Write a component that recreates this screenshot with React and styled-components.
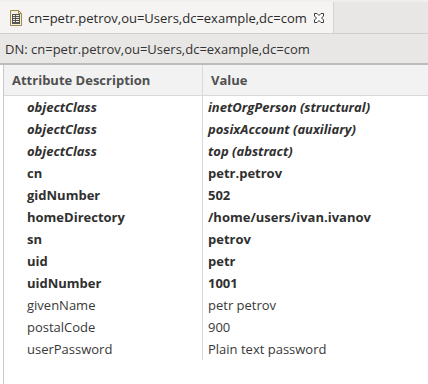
import React from "react";
import styled, { createGlobalStyle } from "styled-components";

const GlobalStyle = createGlobalStyle`
  body {
    margin: 0;
    background: #ffffff;
    font-family: "Open Sans", "Noto Sans", sans-serif;
    font-size: 13px;
    color: #333333;
  }
`;

const rows = [
  { name: "objectClass", value: "inetOrgPerson (structural)", kind: "oc" },
  { name: "objectClass", value: "posixAccount (auxiliary)", kind: "oc" },
  { name: "objectClass", value: "top (abstract)", kind: "oc" },
  { name: "cn", value: "petr.petrov", kind: "must" },
  { name: "gidNumber", value: "502", kind: "must" },
  { name: "homeDirectory", value: "/home/users/ivan.ivanov", kind: "must" },
  { name: "sn", value: "petrov", kind: "must" },
  { name: "uid", value: "petr", kind: "must" },
  { name: "uidNumber", value: "1001", kind: "must" },
  { name: "givenName", value: "petr petrov", kind: "may" },
  { name: "postalCode", value: "900", kind: "may" },
  { name: "userPassword", value: "Plain text password", kind: "may" },
];

export default function App() {
  return (
    <>
      <GlobalStyle />
      <Editor>
        <TabBar>
          <Tab>
            <EntryIcon />
            <TabTitle>cn=petr.petrov,ou=Users,dc=example,dc=com</TabTitle>
            <CloseIcon />
          </Tab>
        </TabBar>
        <DnBar>DN: cn=petr.petrov,ou=Users,dc=example,dc=com</DnBar>
        <TableWrap>
          <Table>
            <HeadCell $first>Attribute Description</HeadCell>
            <HeadCell>Value</HeadCell>
            {rows.map((r, i) => (
              <React.Fragment key={i}>
                <Cell $first $kind={r.kind}>
                  {r.name}
                </Cell>
                <Cell $kind={r.kind}>{r.value}</Cell>
              </React.Fragment>
            ))}
          </Table>
        </TableWrap>
      </Editor>
    </>
  );
}

function EntryIcon() {
  return (
    <IconSvg width="12" height="16" viewBox="0 0 12 16">
      <path d="M0.5 0.5 H8.5 L11.5 3.5 V15.5 H0.5 Z" fill="#f4f0e2" stroke="#a08a4a" />
      <path d="M8.5 0.5 V3.5 H11.5" fill="none" stroke="#a08a4a" />
      <rect x="2.5" y="4.5" width="7" height="9" fill="none" stroke="#555" />
      <path d="M2.5 6.5 H9.5 M2.5 8.5 H9.5 M2.5 10.5 H9.5 M2.5 12.5 H9.5 M5.5 4.5 V13.5" stroke="#555" />
    </IconSvg>
  );
}

function CloseIcon() {
  return (
    <IconSvg width="12" height="12" viewBox="0 0 12 12">
      <path
        d="M1.5 1.5 L4 1.5 L6 3.5 L8 1.5 L10.5 1.5 L10.5 4 L8.5 6 L10.5 8 L10.5 10.5 L8 10.5 L6 8.5 L4 10.5 L1.5 10.5 L1.5 8 L3.5 6 L1.5 4 Z"
        fill="#ffffff"
        stroke="#3a3a3a"
        strokeWidth="1"
      />
    </IconSvg>
  );
}

const IconSvg = styled.svg`
  flex-shrink: 0;
  display: block;
`;

const Editor = styled.div`
  display: flex;
  flex-direction: column;
  height: 384px;
`;

const TabBar = styled.div`
  display: flex;
  height: 31px;
  background: #e8e7e5;
  border-top: 2px solid #f0efed;
  border-bottom: 1px solid #d0cfcd;
`;

const Tab = styled.div`
  display: flex;
  align-items: center;
  gap: 6px;
  padding: 0 8px 0 10px;
  background: #f5f4f2;
  border-right: 1px solid #d3d2d0;
`;

const TabTitle = styled.span`
  color: #2a2a2a;
  white-space: nowrap;
`;

const DnBar = styled.div`
  display: flex;
  align-items: center;
  height: 29px;
  padding-left: 5px;
  background: #e8e7e5;
  color: #333333;
  border-bottom: 2px solid #bdbcba;
  white-space: nowrap;
`;

const TableWrap = styled.div`
  flex: 1;
  margin-left: 3px;
  border-left: 1px solid #c9c8c6;
  background: #ffffff;
`;

const Table = styled.div`
  display: grid;
  grid-template-columns: 199px 1fr;
  grid-template-rows: 31px;
  grid-auto-rows: 22px;
`;

const HeadCell = styled.div`
  display: flex;
  align-items: center;
  padding-left: 8px;
  background: #f2f2f2;
  border-bottom: 1px solid #d9d9d9;
  border-right: ${(p) => (p.$first ? "1px solid #d9d9d9" : "none")};
  font-weight: bold;
  color: #505050;
`;

const Cell = styled.div`
  display: flex;
  align-items: center;
  padding-left: ${(p) => (p.$first ? "23px" : "5px")};
  border-right: ${(p) => (p.$first ? "1px solid #d9d9d9" : "none")};
  font-weight: ${(p) => (p.$kind === "may" ? "normal" : "bold")};
  font-style: ${(p) => (p.$kind === "oc" ? "italic" : "normal")};
  color: ${(p) => (p.$kind === "may" ? "#383838" : "#303030")};
  white-space: nowrap;
`;
